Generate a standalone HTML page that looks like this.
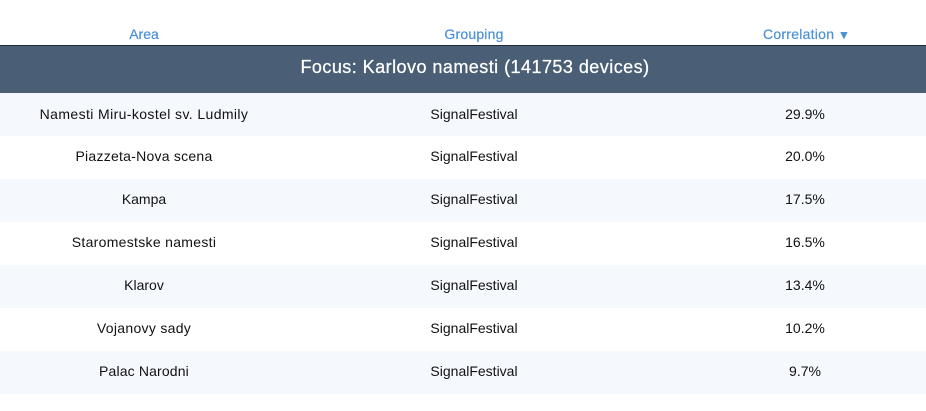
<!DOCTYPE html>
<html>
<head>
<meta charset="utf-8">
<style>
html,body{margin:0;padding:0;background:#fff;width:926px;height:411px;overflow:hidden;font-family:"Liberation Sans",Arial,sans-serif;}
.h{position:absolute;top:24px;height:20px;line-height:20px;font-size:14px;color:#4a90d9;text-align:center;white-space:nowrap;-webkit-text-stroke:0.2px #4a90d9;}
.line{position:absolute;left:0;top:45px;width:926px;height:1px;background:#1f2d3a;}
.band{position:absolute;left:0;top:46px;width:926px;height:47px;background:#4a5f76;}
.title{position:absolute;left:12px;top:0;width:926px;color:#fff;font-size:18px;line-height:43px;text-align:center;white-space:nowrap;letter-spacing:0.46px;-webkit-text-stroke:0.25px #fff;}
.r{position:absolute;left:0;width:926px;height:43px;}
.s{background:#f5f8fd;}
.c{position:absolute;top:0;height:43px;line-height:40px;font-size:14px;color:#111;text-align:center;white-space:nowrap;}
.c1{left:0;width:288px;}
.c2{left:330px;width:288px;}
.c3{left:661px;width:288px;}
.first .c{line-height:42px;}
</style>
</head>
<body>
<div class="h" style="left:0;width:288px;">Area</div>
<div class="h" style="left:330px;width:288px;letter-spacing:0.2px;">Grouping</div>
<div class="h" style="left:763px;letter-spacing:0.25px;">Correlation<span style="position:absolute;left:75px;top:1px;font-size:12px;letter-spacing:0;">▼</span></div>
<div class="line"></div>
<div class="band"><div class="title">Focus: Karlovo namesti (141753 devices)</div></div>
<div class="r s first" style="top:93px"><div class="c c1" style="letter-spacing:0.39px">Namesti Miru-kostel sv. Ludmily</div><div class="c c2">SignalFestival</div><div class="c c3">29.9%</div></div>
<div class="r" style="top:136px"><div class="c c1" style="letter-spacing:0.25px">Piazzeta-Nova scena</div><div class="c c2">SignalFestival</div><div class="c c3">20.0%</div></div>
<div class="r s" style="top:179px"><div class="c c1">Kampa</div><div class="c c2">SignalFestival</div><div class="c c3">17.5%</div></div>
<div class="r" style="top:222px"><div class="c c1" style="letter-spacing:0.3px">Staromestske namesti</div><div class="c c2">SignalFestival</div><div class="c c3">16.5%</div></div>
<div class="r s" style="top:265px"><div class="c c1">Klarov</div><div class="c c2">SignalFestival</div><div class="c c3">13.4%</div></div>
<div class="r" style="top:308px"><div class="c c1" style="letter-spacing:0.3px">Vojanovy sady</div><div class="c c2">SignalFestival</div><div class="c c3">10.2%</div></div>
<div class="r s" style="top:351px"><div class="c c1" style="letter-spacing:0.15px">Palac Narodni</div><div class="c c2">SignalFestival</div><div class="c c3">9.7%</div></div>
</body>
</html>
